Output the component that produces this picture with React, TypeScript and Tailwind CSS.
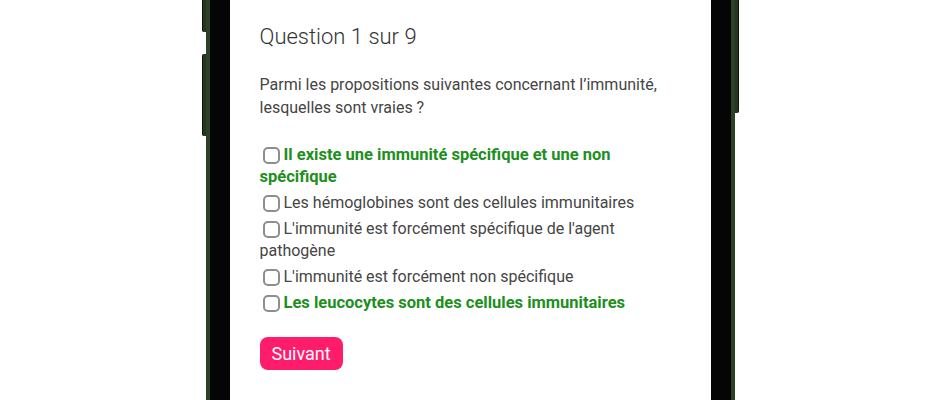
import React from "react";

const options: { text: string; correct: boolean }[] = [
  { text: "Il existe une immunité spécifique et une non spécifique", correct: true },
  { text: "Les hémoglobines sont des cellules immunitaires", correct: false },
  { text: "L'immunité est forcément spécifique de l'agent pathogène", correct: false },
  { text: "L'immunité est forcément non spécifique", correct: false },
  { text: "Les leucocytes sont des cellules immunitaires", correct: true },
];

export default function App() {
  return (
    <div className="w-[940px] h-[400px] bg-white overflow-hidden flex justify-center" style={{ fontFamily: "Roboto, 'Noto Sans', sans-serif" }}>
      <div className="flex flex-row h-[400px]">
        {/* left side buttons */}
        <div className="w-[4px] flex flex-col">
          <div className="h-[32px] bg-[#25361f] rounded-bl-[2px] border-l border-[#0d120b]" />
          <div className="h-[22px]" />
          <div className="h-[82px] bg-[#25361f] rounded-l-[2px] border-l border-[#0d120b]" />
        </div>
        {/* frame */}
        <div className="h-[400px] bg-[#050505] border-x-[4px] border-[#2b4227] px-[20px] flex">
          <div className="w-[481px] h-[400px] bg-white pl-[30px] pr-[30px] pt-[23px]">
            <div className="text-[22px] leading-[28px] font-light text-[#333333]">Question 1 sur 9</div>
            <p className="mt-[22px] text-[16px] leading-[23px] text-[#454545]">
              Parmi les propositions suivantes concernant l’immunité, lesquelles sont vraies ?
            </p>
            <div className="mt-[25px] flex flex-col gap-[4px]">
              {options.map((o, i) => (
                <label key={i} className={"block leading-[22px] " + (o.correct ? "text-[16.5px] font-bold text-[#1d8f1d]" : "text-[16px] text-[#454545]")}>
                  <span className="inline-block w-[17px] h-[17px] border-2 border-[#8e8e8e] rounded-[5px] ml-[3px] mr-[4px] align-[-3.5px] bg-white" />
                  {o.text}
                </label>
              ))}
            </div>
            <button className="mt-[23px] h-[33px] px-[12px] rounded-[8px] bg-[#ff1c6b] text-white text-[18px] leading-[33px]">
              Suivant
            </button>
          </div>
        </div>
        {/* right side button */}
        <div className="w-[4px] flex flex-col">
          <div className="h-[113px] bg-[#25361f] rounded-br-[2px] border-r border-[#0d120b]" />
        </div>
      </div>
    </div>
  );
}
